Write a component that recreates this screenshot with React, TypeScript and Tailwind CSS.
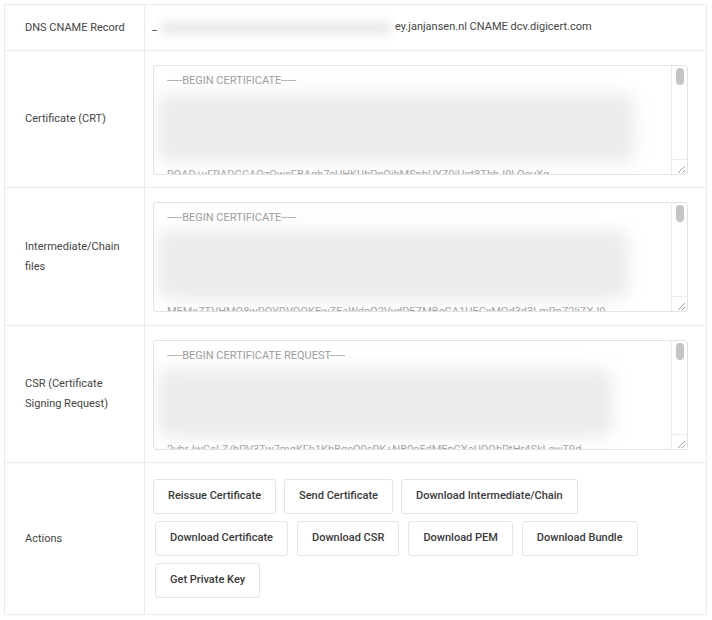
import React from "react";

type Cert = { head: string; tail: string; blurWidth: string };

const certs: Record<string, Cert> = {
  crt: {
    head: "-----BEGIN CERTIFICATE-----",
    tail: "ROAD+vFRADGCAQzQwcFBAgh7cUHKUhPqQjhMSnbUYZ0iUqt8TbhJ9LQcuXg",
    blurWidth: "w-[478px]",
  },
  chain: {
    head: "-----BEGIN CERTIFICATE-----",
    tail: "MEMxZTVHMQ8wDQYDVQQKEwZEaWdpQ2VydDEZMBcGA1UECxMQd3d3LmRpZ2ljZXJ0",
    blurWidth: "w-[472px]",
  },
  csr: {
    head: "-----BEGIN CERTIFICATE REQUEST-----",
    tail: "2vbrJwGsLZ/bPV3Tw7mqKFh1KhBqeQ0sRK+NB0n5dMEnCXaUOQbPtHr4SkLcwT9d",
    blurWidth: "w-[456px]",
  },
};

function CertBox({ cert }: { cert: Cert }) {
  return (
    <div className="relative h-[110px] border border-[#e2e2e2] rounded-[3px] overflow-hidden bg-white">
      <div className="pl-[13px] pt-[5px] pr-[20px] text-[11px] leading-[19.6px] text-[#9a9a9a] whitespace-nowrap">
        <div>{cert.head}</div>
        {/* redacted lines */}
        <div className="h-[74px] -ml-[10px] py-[2px]">
          <div className={`h-full ${cert.blurWidth} bg-[#ececec] blur-[8px] rounded-[14px]`} />
        </div>
        <div>{cert.tail}</div>
      </div>
      {/* scrollbar */}
      <div className="absolute right-0 top-0 bottom-0 w-[16px] border-l border-[#ececec] bg-white">
        <div className="mx-auto mt-[2px] w-[8px] h-[17px] rounded-full bg-[#c4c4c4]" />
      </div>
      <div className="absolute right-0 bottom-0 w-[16px] h-[15px] border-t border-l border-[#ececec] bg-white">
        <svg width="15" height="14" viewBox="0 0 15 14" className="block">
          <path d="M13 6 L6 13 M13 10 L10 13" stroke="#a0a0a0" strokeWidth="1" fill="none" />
        </svg>
      </div>
    </div>
  );
}

const btn =
  "h-[35px] px-[14px] border border-[#e4e4e4] rounded-[3px] bg-white text-[11px] font-medium text-[#3a3a3a] whitespace-nowrap";

const label = "border border-[#ebebeb] pl-[20px] pr-[10px] text-[11px] leading-[20px] text-[#444]";
const cell = "border border-[#ebebeb] pl-[8px] pr-[18px] pt-[14px] pb-[12px] align-top";

export default function App() {
  return (
    <div className="w-[712px] h-[620px] bg-white font-['Roboto',sans-serif] text-[#444]">
      <div className="pl-[4px] pt-[4px]">
        <table className="w-[703px] border-collapse border border-[#ebebeb]">
          <tbody>
            <tr className="h-[46px]">
              <td className={`w-[140px] ${label}`}>DNS CNAME Record</td>
              <td className="border border-[#ebebeb] pl-[7px] text-[11px] text-[#444]">
                <div className="flex items-center">
                  <span>_</span>
                  <div className="w-[238px] h-[16px] px-[4px] py-[1px]">
                    <div className="h-full bg-[#ececec] blur-[4px] rounded" />
                  </div>
                  <span>ey.janjansen.nl CNAME dcv.digicert.com</span>
                </div>
              </td>
            </tr>
            <tr className="h-[137px]">
              <td className={label}>Certificate (CRT)</td>
              <td className={cell}>
                <CertBox cert={certs.crt} />
              </td>
            </tr>
            <tr className="h-[138px]">
              <td className={label}>Intermediate/Chain files</td>
              <td className={cell}>
                <CertBox cert={certs.chain} />
              </td>
            </tr>
            <tr className="h-[137px]">
              <td className={label}>CSR (Certificate Signing Request)</td>
              <td className={cell}>
                <CertBox cert={certs.csr} />
              </td>
            </tr>
            <tr className="h-[151px]">
              <td className={label}>Actions</td>
              <td className="border border-[#ebebeb] pl-[8px] pr-[18px] py-[16px] align-top">
                <div className="flex flex-col gap-[7px]">
                  <div className="flex gap-[8px]">
                    <button className={btn}>Reissue Certificate</button>
                    <button className={btn}>Send Certificate</button>
                    <button className={btn}>Download Intermediate/Chain</button>
                  </div>
                  <div className="flex gap-[9px] pl-[2px]">
                    <button className={btn}>Download Certificate</button>
                    <button className={btn}>Download CSR</button>
                    <button className={btn}>Download PEM</button>
                    <button className={btn}>Download Bundle</button>
                  </div>
                  <div className="flex pl-[2px]">
                    <button className={btn}>Get Private Key</button>
                  </div>
                </div>
              </td>
            </tr>
          </tbody>
        </table>
      </div>
    </div>
  );
}
